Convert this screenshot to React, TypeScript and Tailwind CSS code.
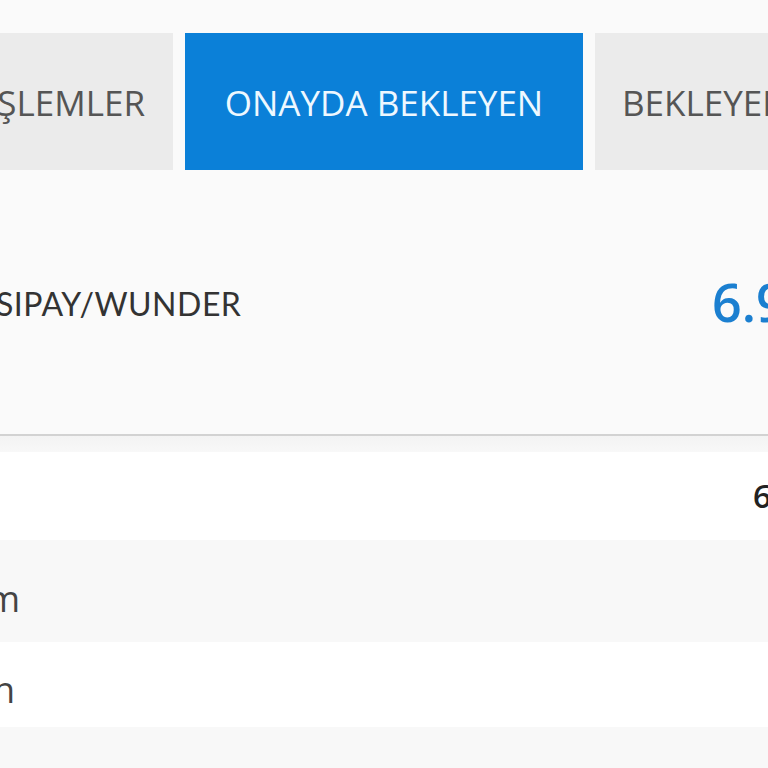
const tabs = [
  { label: "TÜM İŞLEMLER", active: false },
  { label: "ONAYDA BEKLEYEN", active: true },
  { label: "BEKLEYEN ÖDEMELER", active: false },
];

export default function App() {
  return (
    <div className="w-[768px] h-[768px] overflow-hidden bg-[#fafafa] font-['Open_Sans',sans-serif]">
      {/* tabs */}
      <div className="pt-[33px] flex gap-[12px]">
        <div className="w-[173px] h-[137px] shrink-0 bg-[#ebebeb] flex items-center justify-end pr-[28px] pt-[4px] overflow-hidden whitespace-nowrap">
          <span className="text-[35px] text-[#555]">{tabs[0].label}</span>
        </div>
        <div className="w-[398px] h-[137px] shrink-0 bg-[#0b80d8] flex items-center justify-center pt-[4px] whitespace-nowrap">
          <span className="text-[35px] text-[#eef8ff]">{tabs[1].label}</span>
        </div>
        <div className="flex-1 h-[137px] bg-[#ebebeb] flex items-center pl-[27px] pt-[4px] overflow-hidden whitespace-nowrap">
          <span className="text-[35px] text-[#555]">{tabs[2].label}</span>
        </div>
      </div>

      {/* summary card */}
      <div className="h-[266px] flex items-center border-b-2 border-[#d2d2d2] overflow-hidden whitespace-nowrap">
        <div className="w-[712px] shrink-0 -ml-[4px] pt-[4px]">
          <span className="font-['Lato',sans-serif] text-[32px] text-[#333] tracking-[0.5px]">SIPAY/WUNDER</span>
        </div>
        <span className="text-[52px] font-semibold text-[#1b7fd0] ml-[4px]">6.950,00 ₺</span>
      </div>
      <div className="h-[16px] bg-gradient-to-b from-[#f3f3f3] to-[#f8f8f8]" />

      {/* list rows */}
      <div className="h-[88px] bg-white flex items-center overflow-hidden whitespace-nowrap">
        <div className="w-[753px] shrink-0" />
        <span className="text-[32px] font-semibold text-[#222]">6.950,00</span>
      </div>
      <div className="h-[102px] bg-[#f8f8f8] flex items-center pt-[16px] whitespace-nowrap">
        <div className="w-[20px] shrink-0 flex justify-end">
          <span className="text-[36px] text-[#444]">Toplam</span>
        </div>
      </div>
      <div className="h-[85px] bg-white flex items-center pt-[10px] whitespace-nowrap">
        <div className="w-[15px] shrink-0 flex justify-end">
          <span className="text-[36px] text-[#444]">Komisyon</span>
        </div>
      </div>
      <div className="h-[60px] bg-[#f8f8f8]" />
    </div>
  );
}
